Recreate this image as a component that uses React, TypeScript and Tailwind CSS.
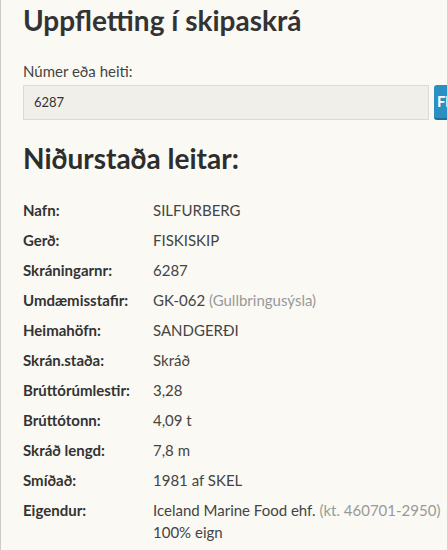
const rows: { label: string; value: string; note?: string; extra?: string }[] = [
  { label: "Nafn:", value: "SILFURBERG" },
  { label: "Gerð:", value: "FISKISKIP" },
  { label: "Skráningarnr:", value: "6287" },
  { label: "Umdæmisstafir:", value: "GK-062", note: "(Gullbringusýsla)" },
  { label: "Heimahöfn:", value: "SANDGERÐI" },
  { label: "Skrán.staða:", value: "Skráð" },
  { label: "Brúttórúmlestir:", value: "3,28" },
  { label: "Brúttótonn:", value: "4,09 t" },
  { label: "Skráð lengd:", value: "7,8 m" },
  { label: "Smíðað:", value: "1981 af SKEL" },
  {
    label: "Eigendur:",
    value: "Iceland Marine Food ehf.",
    note: "(kt. 460701-2950)",
    extra: "100% eign",
  },
];

export default function App() {
  return (
    <div className="h-[550px] overflow-hidden bg-[#faf9f4] border-l border-[#cccccc] pl-[22px] font-['Lato','Liberation_Sans',sans-serif] text-[#333]">
      <h1 className="pt-[5px] text-[28px] leading-[30px] font-bold text-[#333]">
        Uppfletting í skipaskrá
      </h1>

      <label className="block mt-[26px] text-[15px] leading-[20px] text-[#444]">
        Númer eða heiti:
      </label>
      <div className="flex mt-[4px]">
        <div className="w-[406px] h-[35px] shrink-0 bg-[#f1efea] border border-[#dcdad4] flex items-center px-[10px] text-[13px] text-[#333]">
          6287
        </div>
        <button className="ml-[5px] shrink-0 w-[60px] h-[35px] bg-[#2a8fc2] border-b-2 border-[#1d6f99] rounded-[3px] text-white text-[15px] font-bold text-left pl-[3px]">
          Fletta
        </button>
      </div>

      <h2 className="mt-[23px] text-[28px] leading-[30px] font-bold text-[#2d2d2d]">
        Niðurstaða leitar:
      </h2>

      <div className="mt-[22px] flex flex-col">
        {rows.map((r) => (
          <div key={r.label} className="grid grid-cols-[130px_1fr] py-[4px]">
            <div className="text-[15px] leading-[22px] font-bold text-[#333]">{r.label}</div>
            <div className="text-[15px] leading-[22px] text-[#444]">
              {r.value}
              {r.note && <span className="text-[#999]"> {r.note}</span>}
              {r.extra && <div>{r.extra}</div>}
            </div>
          </div>
        ))}
      </div>
    </div>
  );
}
